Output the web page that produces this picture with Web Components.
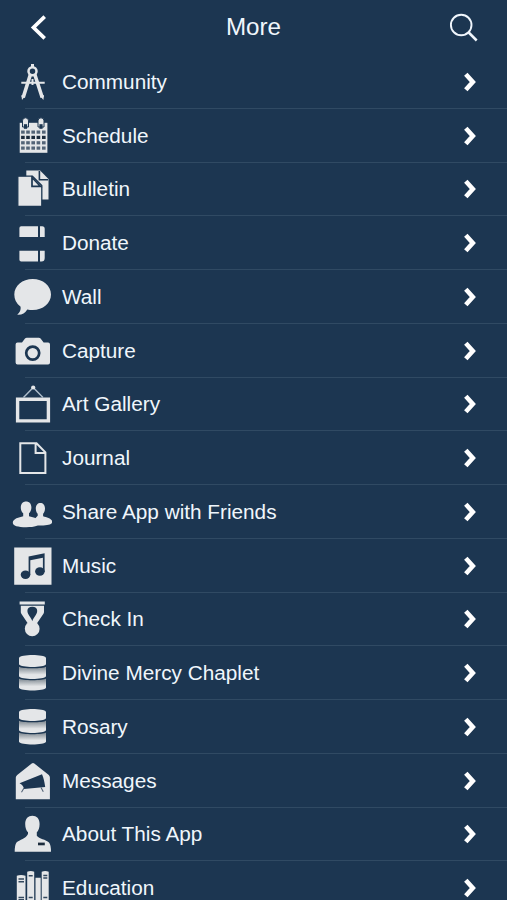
<!DOCTYPE html>
<html lang="en"><head><meta charset="utf-8"><title>More</title>
<style>html,body{margin:0;height:100%;overflow:hidden;background:#1c3651}</style></head>
<body><more-screen></more-screen>
<script>
const ICONS = {
compass:`<g fill="none" stroke="#e4e6e8"><circle cx="32.5" cy="-10.8" r="4" stroke-width="2.5"/><path d="M32.5-18v3.5" stroke-width="3"/><path d="M30.4-7.5 23.2 15.5M34.8-7.5 42.2 15.5" stroke-width="3.6"/><path d="M21.3.8h23.4M32.5-3v6" stroke-width="2"/></g><path d="M21.4 13l3.6 1.2-3 3.9zM44 13l-3.6 1.2 3 3.9z"/>`,
calendar:()=>{let s='<path d="M19.7-13.2h27.7v30H19.7z"/>';
 [-3.9,1.4,6.8,12.1].forEach((y,r)=>[22.9,28,33.2,38.4,43.8].forEach(x=>s+=`<rect x="${x-1.8}" y="${y-1.6}" width="3.6" height="3.2" fill="${r==1?'#1c2c3d':'#536477'}"/>`));
 [25.5,41].forEach(x=>s+=`<path d="M${x-3}-9v-6.2a3 3 0 0 1 6 0V-9z" stroke="#1c3651"/><path d="M${x-1.6}-7.2v-4.6h3.2v4.6z" fill="#1c3651"/>`);return s},
copy:`<path d="M26.3-18.4h13.8l8.4 8.4v20.5H26.3z"/><path d="M39.4-18v8.7h8.7" fill="none" stroke="#1c3651" stroke-width="1.6"/><path d="M17.8-12.8h14.6l9.4 9.4v20.8h-24z" stroke="#1c3651" stroke-width="1.3"/><path d="M32-11.5v8.8h8.5z" stroke="#1c3651" stroke-width="1.7"/>`,
donate:`<path d="M21.2-16.8H38v10.7H19.4v-8.9q0-1.8 1.8-1.8M40-16.8h2.2q2.5 0 2.5 2.5v8.2H40zM19.4 7.7H38v10.8H21.2q-1.8 0-1.8-1.8zM40 7.7h4.7v7.3q0 3.5-3.2 3.5H40z"/>`,
bubble:`<path d="M32.7-18C43-18 51-11.2 51-2.5S43 13 32.7 13q-2.8 0-5.4-.6-3.5 5.8-10.1 5.2 4-3 3.4-7.9Q14.3 5.3 14.3-2.5C14.3-11.2 22.4-18 32.7-18z"/>`,
camera:`<path d="M17.5-8.5H22l3-4q.7-.8 1.8-.8h12q1 0 1.8.8l3 4h4.5q1.9 0 1.9 2v18q0 2-1.9 2H17.5q-1.9 0-1.9-2v-18q0-2 1.9-2z"/><circle cx="32.7" cy="2.1" r="6.5" fill="none" stroke="#1c3651" stroke-width="2.7"/>`,
frame:`<path d="M17.6-4.8h30.8v21.7H17.6z" fill="none" stroke="#e4e6e8" stroke-width="3.4"/><path d="M23.5-6.5 33.2-16.5 43-6.5" fill="none" stroke="#aebdcb" stroke-width="1.4"/><circle cx="33.2" cy="-16.5" r="2.1"/>`,
page:`<path d="M20.3-14.8h16.2l8.9 9.2V15H20.3zM35.6-14.5v9.6H45.3" fill="none" stroke="#e4e6e8" stroke-width="2"/>`,
people:`<path d="M35.8-3.5c0-3.5 2-5.5 4.6-5.5S45-7 45-3.5c0 2.5-1 4.3-1.9 5.3v2.4C47 5.4 52.2 6.3 52.2 10c0 2.4-4 3.6-11 3.6-4 0-8-.7-10-3.2l6.5-6.6V1.8c-1-1-1.9-2.8-1.9-5.3z"/><path d="M20.8-4.5c0-4 2.3-6 5.3-6s5.3 2 5.3 6c0 2.8-1.3 4.8-2.4 5.8v2.9C34 5.4 39.8 6.8 39.8 10.6c0 3-5 4.7-13.5 4.7S12.8 13.8 12.8 10.8c0-4.4 6.2-5.4 10.4-6.6V1.3c-1.3-1-2.4-3-2.4-5.8z"/>`,
music:`<path d="M14.2-18.4h37.3v37.2H14.2z"/><g fill="#1c3651"><ellipse cx="25.5" cy="8.7" rx="4.8" ry="4.2"/><ellipse cx="39.9" cy="5.5" rx="4.8" ry="4.2"/><path d="M28.6 9V-9.5l16-3.2V6h-1.7V-8.3l-12.6 2.6V9z"/></g>`,
medal:`<path d="M19.6-17.4h25.2v2.8H19.6zM20.8-13.3h23.2v6.4q0 1.2-.7 2L36.5 5H28.2L21.5-4.9q-.7-.8-.7-2z"/><path d="M32.3 2.2C31.2-1.6 27.4-4.3 27.4-8.2c0-2.6 2-4 4.9-4s4.9 1.4 4.9 4c0 3.9-3.8 6.6-4.9 10.4z" fill="#1c3651"/><circle cx="32.2" cy="9.8" r="7.4"/>`,
stack:`<path d="M19-15.3c1-1.8 7-2.7 13.5-2.7S45-17.1 46-15.3v6.6C45-6.9 39-6 32.5-6S20-6.9 19-8.7z"/><path d="M19-6.6C21-4.4 44-4.4 46-6.6V3.3C45 5.1 39 6 32.5 6S20 5.1 19 3.3zM19 5.2c2 2.4 25 2.4 27 0v9.6c-1 1.8-7 2.7-13.5 2.7S20 16.6 19 14.8z" fill="none"/><path d="M19-6.2C21-4.2 44-4.2 46-6.2V3.3C45 5.1 39 6 32.5 6S20 5.1 19 3.3z" fill="url(#shade)"/><path d="M19 5.6c2 2.2 25 2.2 27 0v9.2c-1 1.8-7 2.7-13.5 2.7S20 16.6 19 14.8z" fill="url(#shade)"/>`,
mail:`<path d="M15.8-3.5Q15.9-5 17.2-6L31.7-17.6q1.3-1 2.6 0L48.8-6q1.1 1 1.1 2.5v21.7H15.8z"/><path d="M19.5 2.3 42-6.8Q44-2.5 45.2 6L24 8q-.8-4.2-4.5-5.7z" fill="#1c3651"/><path d="M24 7l-2.5 4.3M41 6.5l2.3 4.3" stroke="#536477" stroke-width="1.1"/>`,
person:`<path d="M25.2-10c0-5.3 3-8.2 7.2-8.2s7.2 2.9 7.2 8.2c0 4.2-1.2 6.7-2.8 8.2v3.5C39 4.7 46 5.5 49 8.5q2 2.3 2 9.3H14.7Q14.7 10.8 16.5 8.5C19.5 5.5 26 4.7 28-.1v-1.7C26.4-3.3 25.2-5.8 25.2-10z"/><path d="M38 8.6h6.8v2.7H38z" fill="#1c2c3d"/>`,
books:`<path d="M16.8-12.3q4.2-1.5 8.7 0V20h-8.7zM27.2-16.2q3.5-1.5 7 0V20h-7zM35.5-10.3h5.2V20h-5.2zM41.7-16.2q3.5-1.5 7 0V20h-7z"/><path d="M18.5-9H24M18.5-6.3H24M28.7-12.3h4M43.3-12.5h4M43.3-10h4M18.5 9.5H24M18.5 11.8H24M28.7 9.5h4M43.3 9.5h4" stroke="#33485e" stroke-width="1.4"/>`
};
const define=(name,html,setup)=>customElements.define(name,class extends HTMLElement{
 connectedCallback(){ if(this.shadowRoot)return; const t=document.createElement('template');t.innerHTML=typeof html==='function'?html(this):html;
 this.attachShadow({mode:'open'}).append(t.content.cloneNode(true)); if(setup)setup(this.shadowRoot,this);}
});
define('menu-icon',`<style>:host{display:block;width:40px;height:40px;flex:none}svg{display:block;fill:#e4e6e8;overflow:hidden}</style><svg width="40" height="40" viewBox="12 -20 40 40"></svg>`,(root,el)=>{
 const i=ICONS[el.getAttribute('name')];
 root.querySelector('svg').innerHTML='<defs><linearGradient id="shade" x1="0" y1="0" x2="0" y2="1"><stop offset=".12" stop-color="#8f989f"/><stop offset=".65" stop-color="#e4e6e8"/></linearGradient></defs>'+(typeof i==='function'?i():i);
});
define('menu-row',el=>`<style>
:host{display:grid;grid-template-columns:40px 1fr 12px;align-items:center;height:53.77px;flex:none;padding:0 31.5px 1px 12px;box-sizing:border-box;color:#f0f6fc;
background:linear-gradient(#304a63,#304a63) 25px 100%/100% 1.4px no-repeat}
.label{padding-left:10px;white-space:nowrap;font-size:20.75px;line-height:26px}
svg{display:block}</style>
<menu-icon name="${el.getAttribute('icon')}"></menu-icon><div class="label"><slot></slot></div>
<svg width="12" height="20" viewBox="0 0 12 20" fill="none" stroke="#fff" stroke-width="4.6"><path d="M1.8 2.3 8.8 10l-7 7.7"/></svg>`);
define('nav-bar',`<style>
:host{display:grid;grid-template-columns:60px 1fr 60px;align-items:center;height:55.4px;padding-bottom:.6px;box-sizing:border-box;flex:none;color:#f0f6fc;text-align:center}
.title{font-size:24.2px;line-height:30px}svg{display:block}</style>
<svg width="60" height="54" viewBox="0 0 60 54" fill="none" stroke="#fff" stroke-width="3.7"><path d="M44.7 16.7 33.5 27.5l11.2 10.8"/></svg>
<div class="title"><slot></slot></div>
<svg width="60" height="54" viewBox="447 0 60 54" fill="none" stroke="#f0f6fc"><circle cx="461.2" cy="25" r="10.3" stroke-width="1.9"/><path d="m468.7 32.5 8 8" stroke-width="2.5"/></svg>`);
const rows=[['compass','Community'],['calendar','Schedule'],['copy','Bulletin'],['donate','Donate'],['bubble','Wall'],['camera','Capture'],['frame','Art Gallery'],['page','Journal'],['people','Share App with Friends'],['music','Music'],['medal','Check In'],['stack','Divine Mercy Chaplet'],['stack','Rosary'],['mail','Messages'],['person','About This App'],['books','Education']];
define('more-screen',`<style>:host{display:flex;flex-direction:column;width:507px;height:900px;overflow:hidden;background:#1c3651;font-family:"Liberation Sans",Arial,sans-serif}</style>
<nav-bar>More</nav-bar>${rows.map(([i,t])=>`<menu-row icon="${i}">${t}</menu-row>`).join('')}`);
</script></body></html>
